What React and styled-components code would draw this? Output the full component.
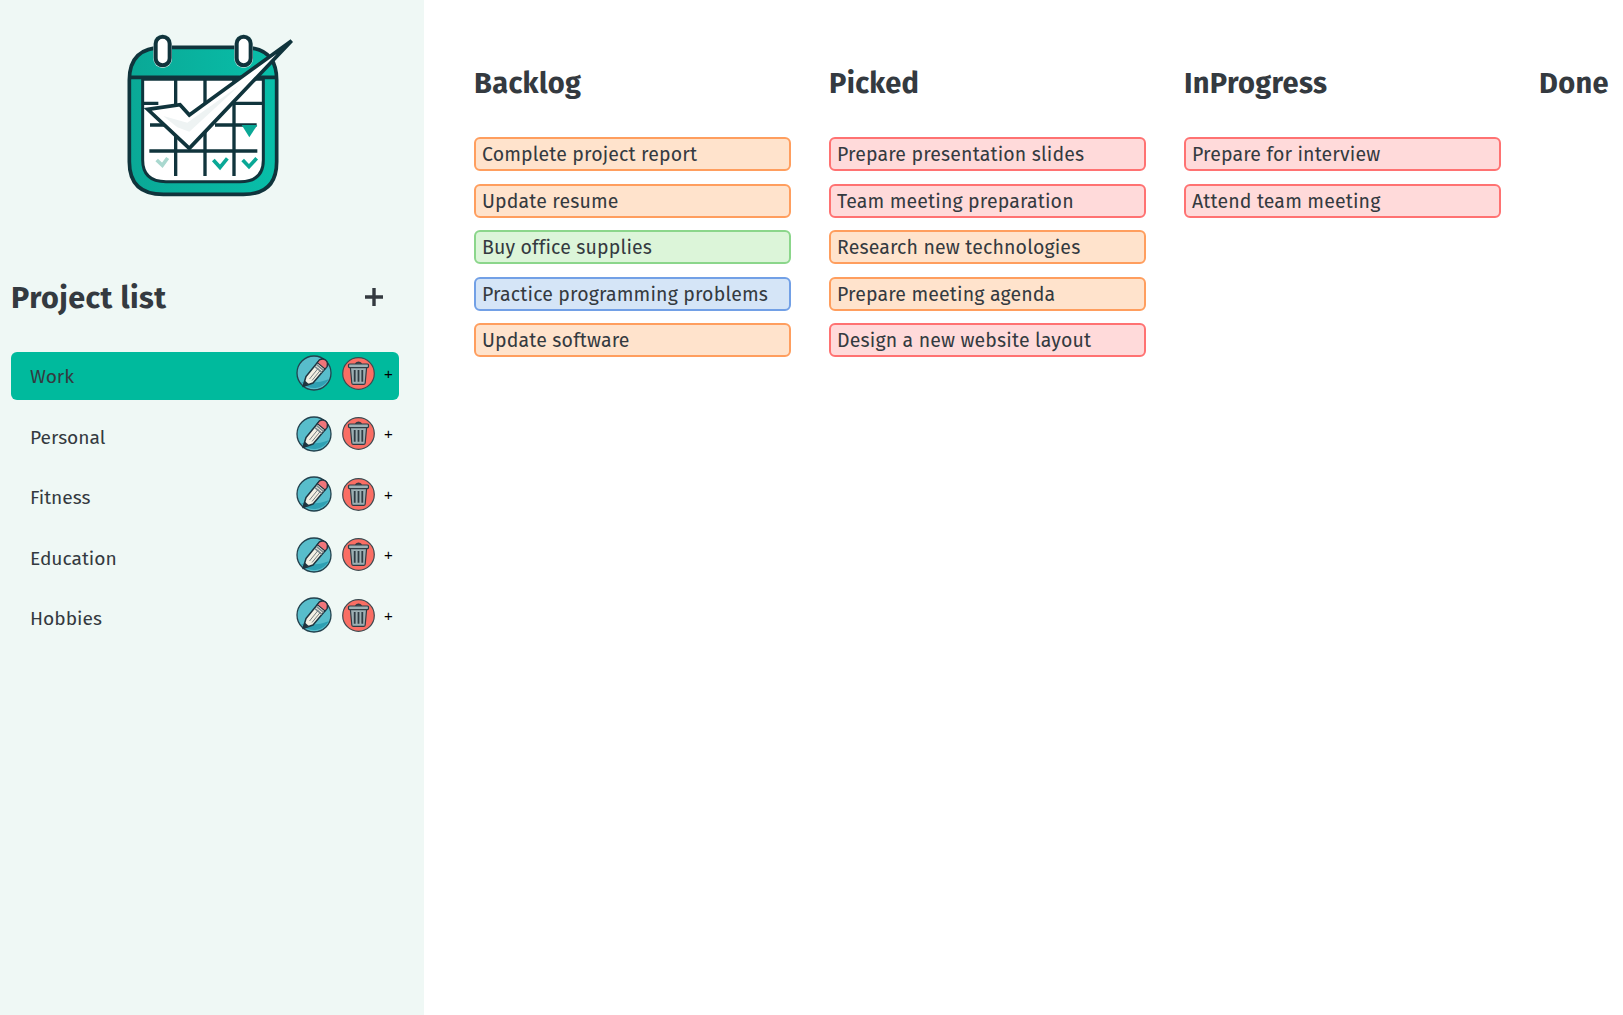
import React from "react";
import styled, { createGlobalStyle } from "styled-components";

const Global = createGlobalStyle`
  html, body { margin: 0; padding: 0; height: 100%; overflow: hidden; background: #fff; }
  body { font-family: "Trebuchet MS", "Fira Sans", Lato, "Open Sans", sans-serif; color: #343a40; }
`;

const Page = styled.div`
  display: flex;
  width: 1623px;
  height: 1015px;
  overflow: hidden;
`;
const Sidebar = styled.aside`
  flex: 0 0 424px;
  background: #eff8f5;
  padding: 20px 0 0 0;
  box-sizing: border-box;
`;
const LogoBox = styled.div`
  padding-left: 100px;
  height: 190px;
  margin-bottom: 63px;
  svg { display: block; }
`;
const ListHeader = styled.div`
  display: flex;
  align-items: center;
  justify-content: space-between;
  padding: 0 40px 0 11px;
  height: 48px;
  margin-bottom: 31px;
`;
const ListTitle = styled.h2`
  margin: 0;
  font-size: 30.5px;
  font-weight: 700;
  letter-spacing: 0.45px;
  color: #343a40;
`;
const AddButton = styled.span`
  display: block;
  width: 20px;
  height: 20px;
  svg { display: block; }
`;
const ProjectList = styled.ul`
  list-style: none;
  margin: 0;
  padding: 0 25px 0 11px;
  display: flex;
  flex-direction: column;
  gap: 12.5px;
`;
const ProjectRow = styled.li`
  display: flex;
  align-items: flex-start;
  height: 48px;
  border-radius: 6px;
  padding: 0 0 0 19px;
  background: ${p => (p.$active ? "#00ba9d" : "transparent")};
`;
const ProjectName = styled.span`
  flex: 1;
  font-size: 19.2px;
  line-height: 49px;
  color: #343a40;
`;
const Actions = styled.div`
  display: flex;
  align-items: center;
  height: 42px;
  gap: 9.5px;
  svg { display: block; }
`;
const Plus = styled.span`
  width: 15px;
  font-family: "Liberation Sans", sans-serif;
  font-size: 15px;
  color: #000;
  text-align: left;
`;
const Board = styled.main`
  flex: 1;
  display: flex;
  gap: 38px;
  padding: 0 0 0 50px;
  min-width: 0;
`;
const Column = styled.section`
  flex: 0 0 317px;
`;
const ColumnTitle = styled.h2`
  margin: 0;
  height: 137.3px;
  padding-top: 64px;
  box-sizing: border-box;
  font-size: 29px;
  line-height: 40px;
  font-weight: 700;
  letter-spacing: 0.3px;
  color: #343a40;
`;
const CardStack = styled.div`
  display: flex;
  flex-direction: column;
  gap: 12.5px;
`;
const tones = {
  orange: ["#ffe3cc", "#ff9e5e"],
  red: ["#ffdada", "#ff7272"],
  green: ["#dcf5d9", "#8bd68b"],
  blue: ["#d5e5f7", "#72a0e6"],
};
const Card = styled.div`
  box-sizing: border-box;
  height: 34px;
  padding: 0 6px;
  border: 2px solid ${p => tones[p.$tone][1]};
  background: ${p => tones[p.$tone][0]};
  border-radius: 6px;
  font-size: 19.5px;
  line-height: 31px;
  letter-spacing: 0.15px;
  color: #343a40;
  white-space: nowrap;
`;

const Logo = () => (
  <svg width="220" height="190" viewBox="0 0 660 570">
    <defs>
      <linearGradient id="logoHeader" x1="0" y1="0" x2="1" y2="0">
        <stop offset="0" stopColor="#0aa896" />
        <stop offset="1" stopColor="#08bfa9" />
      </linearGradient>
    </defs>
    <path d="M190 82 H430 Q530 82 530 180 V425 Q530 523 430 523 H190 Q88 523 88 425 V180 Q88 82 190 82Z" fill="url(#logoHeader)" stroke="#10343c" strokeWidth="11" />
    <path d="M128 178 H490 V420 Q490 485 420 485 H198 Q128 485 128 420Z" fill="#fff" stroke="#10343c" strokeWidth="9" />
    <path d="M90 172 H528" stroke="#10343c" strokeWidth="11" />
    <path d="M130 250 H175 M390 250 H490 M150 315 H200 M345 315 H470 M148 393 H472 M227 180 V468 M315 180 V468 M402 180 V468" stroke="#10343c" strokeWidth="10" fill="none" />
    <rect x="160" y="42" width="56" height="102" rx="28" fill="#dff3ef" />
    <rect x="403" y="42" width="56" height="102" rx="28" fill="#dff3ef" />
    <rect x="167" y="50" width="42" height="86" rx="21" fill="#fff" stroke="#10343c" strokeWidth="12" />
    <rect x="410" y="50" width="42" height="86" rx="21" fill="#fff" stroke="#10343c" strokeWidth="12" />
    <path d="M143 268 L240 254 L268 285 L575 62 L268 385Z" fill="#fff" stroke="#10343c" strokeWidth="11" strokeLinejoin="miter" />
    <path d="M190 288 L262 308 L420 195 L268 335 L232 322Z" fill="#eef3f3" />
    <path d="M425 315 H472 L448 352Z" fill="#0aa896" />
    <path d="M340 420 L360 442 L382 415" stroke="#0aa896" strokeWidth="11" fill="none" />
    <path d="M428 420 L447 440 L470 415" stroke="#0aa896" strokeWidth="11" fill="none" />
    <path d="M170 420 L187 436 L203 414" stroke="#a9d8cf" strokeWidth="11" fill="none" />
  </svg>
);

const EditIcon = () => (
  <svg width="36" height="36" viewBox="0 0 36 36">
    <circle cx="18" cy="18" r="17" fill="#58bdcb" stroke="#23424e" strokeWidth="1.3" />
    <path d="M5 27 A17 17 0 0 0 33 24 Q22 29 5 27Z" fill="#2fa0b3" />
    <path d="M7 31.5 L10 21.5 L23.5 5 Q27 3 30 5.5 Q32.5 8.5 31 11.5 L17 28Z" fill="#f3efe3" stroke="#1f3540" strokeWidth="1.5" strokeLinejoin="round" />
    <path d="M23.5 5 Q27 3 30 5.5 Q32.5 8.5 31 11.5 L29 14 L21.3 7.7Z" fill="#f0757a" stroke="#1f3540" strokeWidth="1.1" />
    <path d="M20.6 9.6 L27.6 15.4 M19 11.6 L26 17.4" stroke="#7c8a90" strokeWidth="1.6" />
    <path d="M7 31.5 L8.8 25.6 L12.8 29Z" fill="#1f3540" />
    <path d="M13.5 24 L22 13.5 M16 25.5 L24.2 15.5" stroke="#6a7479" strokeWidth="0.9" />
  </svg>
);

const TrashIcon = () => (
  <svg width="33" height="33" viewBox="0 0 33 33">
    <circle cx="16.5" cy="16.5" r="15.8" fill="#fa6e64" stroke="#3d4a50" strokeWidth="1.2" />
    <path d="M13.5 6.8 Q16.5 3.4 19.5 6.8" fill="#2f3c44" stroke="#2f3c44" strokeWidth="1.4" />
    <rect x="6.5" y="7" width="20" height="3.6" rx="1" fill="#9db0b4" stroke="#2f3c44" strokeWidth="1.2" />
    <path d="M8.4 10.6 H24.6 L23.2 26 Q23 27.4 21.6 27.4 H11.4 Q10 27.4 9.8 26Z" fill="#9db0b4" stroke="#2f3c44" strokeWidth="1.2" />
    <path d="M12.7 13 V24.8 M16.5 13 V24.8 M20.3 13 V24.8" stroke="#2f3c44" strokeWidth="1.8" />
  </svg>
);

const projects = ["Work", "Personal", "Fitness", "Education", "Hobbies"];
const columns = [
  { title: "Backlog", cards: [["Complete project report", "orange"], ["Update resume", "orange"], ["Buy office supplies", "green"], ["Practice programming problems", "blue"], ["Update software", "orange"]] },
  { title: "Picked", cards: [["Prepare presentation slides", "red"], ["Team meeting preparation", "red"], ["Research new technologies", "orange"], ["Prepare meeting agenda", "orange"], ["Design a new website layout", "red"]] },
  { title: "InProgress", cards: [["Prepare for interview", "red"], ["Attend team meeting", "red"]] },
  { title: "Done", cards: [] },
];

export default function App() {
  return (
    <Page>
      <Global />
      <Sidebar>
        <LogoBox><Logo /></LogoBox>
        <ListHeader>
          <ListTitle>Project list</ListTitle>
          <AddButton>
            <svg width="20" height="20" viewBox="0 0 20 20"><path d="M10 1 V19 M1 10 H19" stroke="#343a40" strokeWidth="3.4" /></svg>
          </AddButton>
        </ListHeader>
        <ProjectList>
          {projects.map((name, i) => (
            <ProjectRow key={name} $active={i === 0}>
              <ProjectName>{name}</ProjectName>
              <Actions>
                <EditIcon />
                <TrashIcon />
                <Plus>+</Plus>
              </Actions>
            </ProjectRow>
          ))}
        </ProjectList>
      </Sidebar>
      <Board>
        {columns.map(col => (
          <Column key={col.title}>
            <ColumnTitle>{col.title}</ColumnTitle>
            <CardStack>
              {col.cards.map(([text, tone]) => (
                <Card key={text} $tone={tone}>{text}</Card>
              ))}
            </CardStack>
          </Column>
        ))}
      </Board>
    </Page>
  );
}
